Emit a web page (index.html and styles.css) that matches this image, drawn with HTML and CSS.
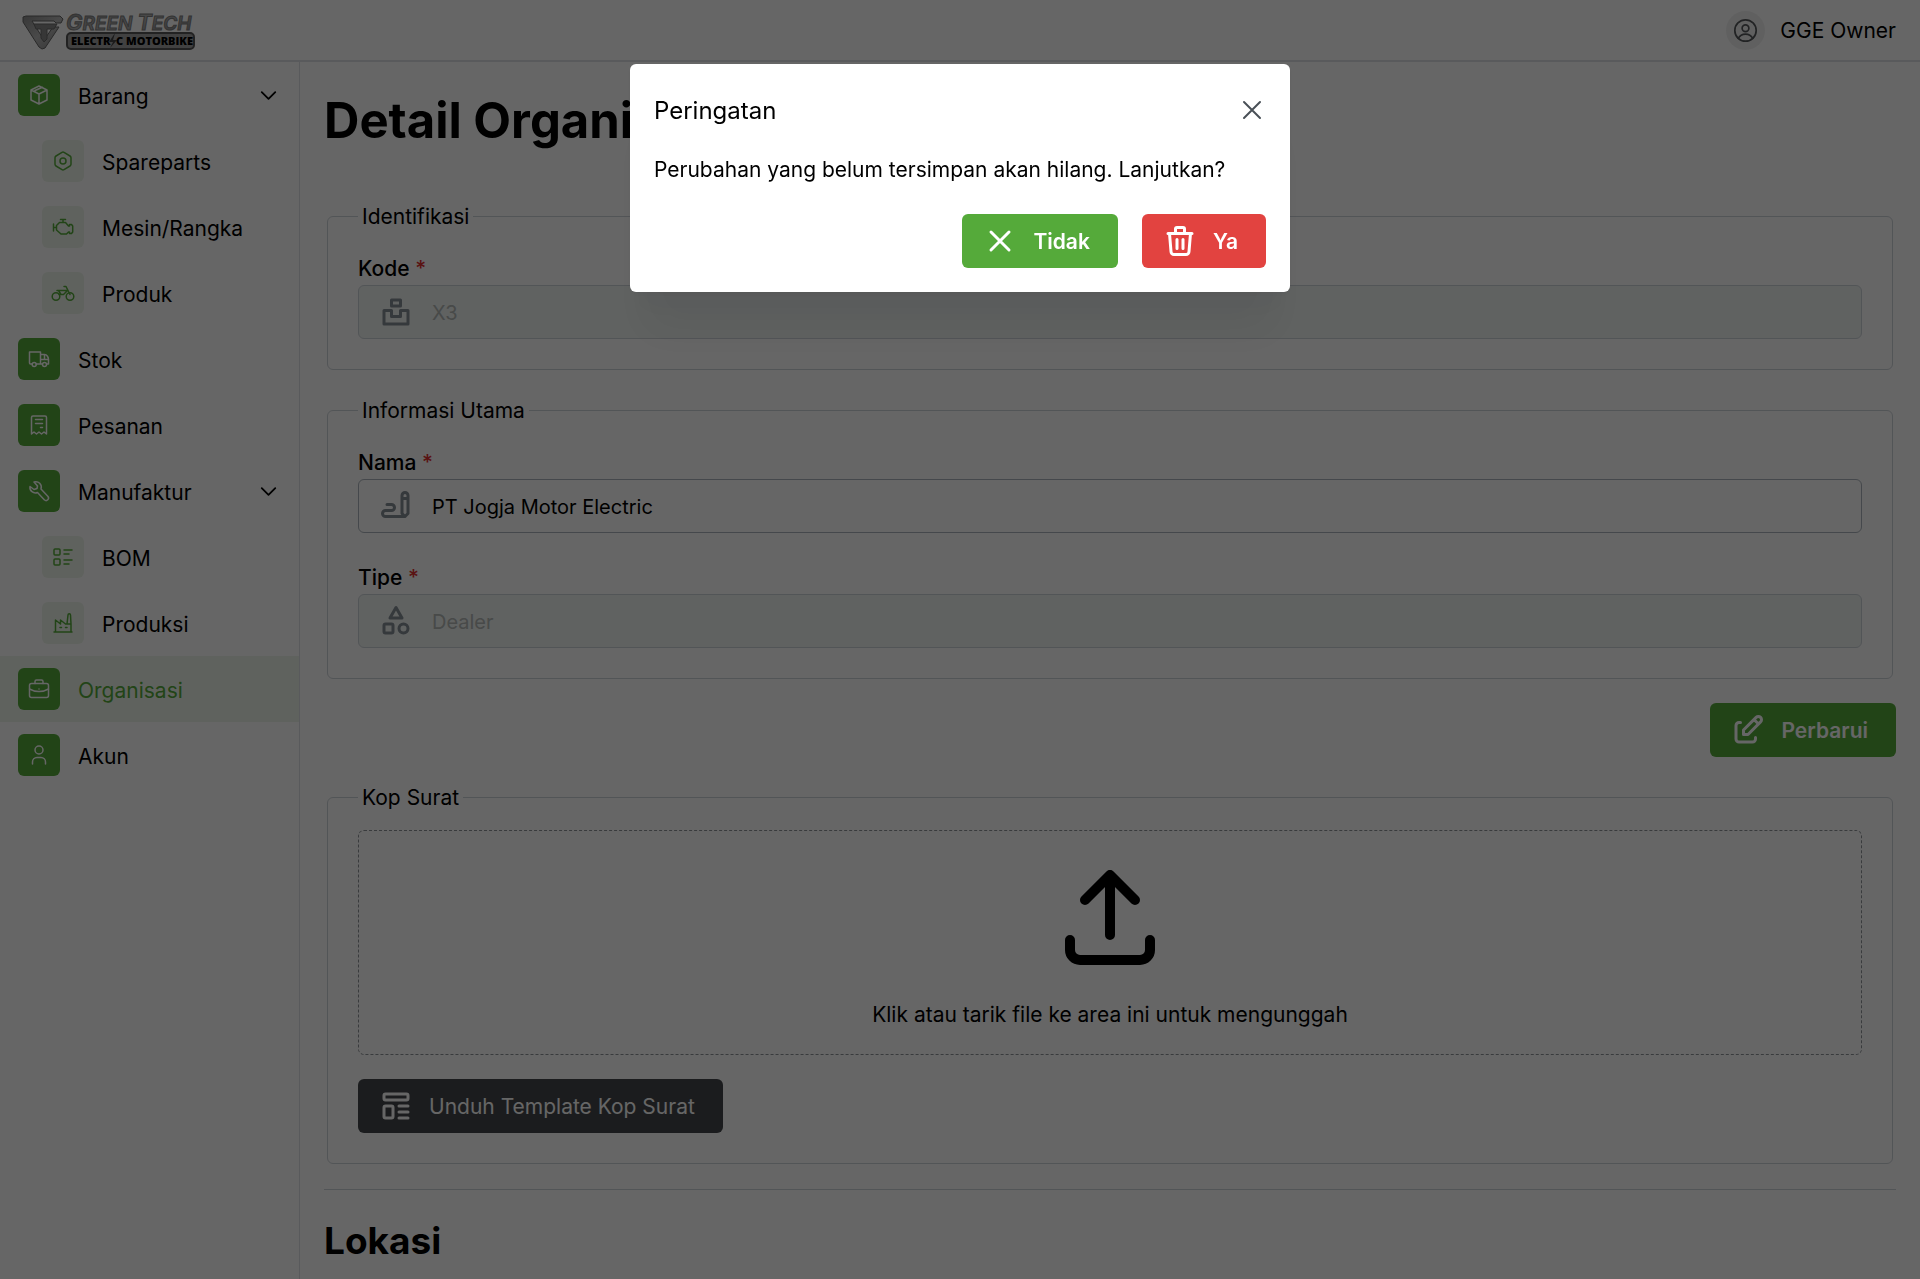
FILE: index.html
```html
<!DOCTYPE html>
<html lang="id">
<head>
<meta charset="utf-8">
<meta name="viewport" content="width=device-width, initial-scale=1">
<title>Detail Organisasi</title>
<link rel="stylesheet" href="styles.css">
</head>
<body>
<div class="app">
  <header class="topbar">
    <a class="logo" href="#" aria-label="Green Tech">
      <svg width="176" height="46" viewBox="0 -6 176 46">
        <defs>
          <linearGradient id="steel" x1="0" y1="0" x2="1" y2="1">
            <stop offset="0" stop-color="#8c8c8c"/><stop offset=".5" stop-color="#b8b8b8"/><stop offset="1" stop-color="#858585"/>
          </linearGradient>
        </defs>
        <path d="M1 4l3-1h34l3 3-2 4H34l-2-2H10l12 19 9-13h6L23 35l-3 1-3-2L1 9z" fill="url(#steel)" stroke="#666" stroke-linejoin="round"/>
        <path d="M12 11h23l-3 5h-7v10l-3 3-3-4v-9h-5z" fill="#8a8a8a" stroke="#6a6a6a"/>
        <text class="logo-name" x="44" y="17" fill="url(#steel)" stroke="#808080"><tspan class="logo-cap">G</tspan>REEN <tspan class="logo-cap">T</tspan>ECH</text>
        <rect x="45" y="20" width="127" height="16" rx="4" fill="#a2a2a2" stroke="#555" stroke-width="2"/>
        <text class="logo-tag" x="49" y="32">ELECTR</text>
        <path d="M93 20l-6 9h4l-3 6 7-8h-4z" fill="#444"/>
        <text class="logo-tag" x="94" y="32">C MOTORBIKE</text>
      </svg>
    </a>
    <div class="account">
      <span class="avatar">
        <svg width="27" height="27" viewBox="0 0 24 24" class="line thin"><circle cx="12" cy="12" r="9.500"/><circle cx="12" cy="10" r="3"/><path d="M5.500 19c1.500-2.700 3.500-3.800 6.500-3.800s5 1.100 6.500 3.800"/></svg>
      </span>
      <span>GGE Owner</span>
    </div>
  </header>

  <div class="body">
    <nav class="sidebar" aria-label="Menu">
      <button class="nav-item" type="button" aria-expanded="true">
        <span class="tile"><svg class="line thin" width="24" height="24" viewBox="0 0 24 24"><path d="M12 3l8 4v10l-8 4-8-4V7zM4 7l8 4 8-4M12 11v10M8 9V7.500l7.500-3.300"/></svg></span>
        <span class="nav-label">Barang</span>
        <svg class="line chevron" width="27" height="27" viewBox="0 0 24 24"><path d="M6 9l6 6 6-6"/></svg>
      </button>
      <a class="nav-item sub" href="#">
        <span class="tile"><svg class="line thin" width="24" height="24" viewBox="0 0 24 24"><path d="M13 3.400l6 3.600a2 2 0 0 1 1 1.700v6.600a2 2 0 0 1-1 1.700l-6 3.600a2 2 0 0 1-2 0L5 17a2 2 0 0 1-1-1.700V8.700A2 2 0 0 1 5 7l6-3.600a2 2 0 0 1 2 0z"/><circle cx="12" cy="12" r="3"/></svg></span>
        <span class="nav-label">Spareparts</span>
      </a>
      <a class="nav-item sub" href="#">
        <span class="tile"><svg class="line thin" width="24" height="24" viewBox="0 0 24 24"><path d="M2.500 9v7M2.500 12.500H5M9.500 4.500h5M12 4.500v3M8.500 7.500h6l3 3.500h1V9.500h2l1.200 1.500v6l-1.200 1.500h-2V17h-1l-2 2h-5.500L5.500 15v-4.500z"/></svg></span>
        <span class="nav-label">Mesin/Rangka</span>
      </a>
      <a class="nav-item sub" href="#">
        <span class="tile"><svg class="line thin" width="24" height="24" viewBox="0 0 24 24"><circle cx="5" cy="15.500" r="3.800"/><circle cx="19" cy="15.500" r="3.800"/><path d="M8 13.500h4.500l4-4H6M10 13.500l-2.500-4M13 5.500h2l1.500 3 2.500 5"/></svg></span>
        <span class="nav-label">Produk</span>
      </a>
      <a class="nav-item" href="#">
        <span class="tile"><svg class="line thin" width="24" height="24" viewBox="0 0 24 24"><path d="M5.200 17H3.500a1 1 0 0 1-1-1V5h11v12H9.200M13.500 7.500h4c2.500 0 4 3 4 5V17h-1.700M13.500 17h2M13.500 12.500h8M17.500 7.500v5"/><circle cx="7.200" cy="17.500" r="2"/><circle cx="17.500" cy="17.500" r="2"/></svg></span>
        <span class="nav-label">Stok</span>
      </a>
      <a class="nav-item" href="#">
        <span class="tile"><svg class="line thin" width="24" height="24" viewBox="0 0 24 24"><path d="M4.500 21V4.500A1.500 1.500 0 0 1 6 3h12a1.500 1.500 0 0 1 1.500 1.500V21L17 19l-2.500 2-2.500-2-2.500 2L7 19zM8.500 6.500h7M8.500 10.500h7M13.500 14.500h2"/></svg></span>
        <span class="nav-label">Pesanan</span>
      </a>
      <button class="nav-item" type="button" aria-expanded="true">
        <span class="tile"><svg class="line thin" width="24" height="24" viewBox="0 0 24 24"><path d="M7 3a5.500 5.500 0 0 1 7 7l7 7.500a2.500 2.500 0 0 1-3.500 3.500L10.500 13.500A5.500 5.500 0 0 1 3 7.500l4 3 3-1 .5-2.500z"/></svg></span>
        <span class="nav-label">Manufaktur</span>
        <svg class="line chevron" width="27" height="27" viewBox="0 0 24 24"><path d="M6 9l6 6 6-6"/></svg>
      </button>
      <a class="nav-item sub" href="#">
        <span class="tile"><svg class="line thin" width="24" height="24" viewBox="0 0 24 24"><path d="M13 5h8M13 9h5M13 15h8M13 19h5"/><rect x="3" y="4" width="6" height="6" rx="1"/><rect x="3" y="14" width="6" height="6" rx="1"/></svg></span>
        <span class="nav-label">BOM</span>
      </a>
      <a class="nav-item sub" href="#">
        <span class="tile"><svg class="line thin" width="24" height="24" viewBox="0 0 24 24"><path d="M3 21h18M4.500 21V9l5 4V9l5 4h5.500M16 13l1-9a1.200 1.200 0 0 1 2.500 0l.5 9v8M9 16.500h1.500M14.500 16.500H16"/></svg></span>
        <span class="nav-label">Produksi</span>
      </a>
      <a class="nav-item active" href="#" aria-current="page">
        <span class="tile"><svg class="line thin" width="24" height="24" viewBox="0 0 24 24"><rect x="2.500" y="6.500" width="19" height="14" rx="2"/><path d="M8 6.500V4.500a1.500 1.500 0 0 1 1.500-1.500h5A1.500 1.500 0 0 1 16 4.500v2M2.500 12c6 3.300 13 3.300 19 0M12 12v.1"/></svg></span>
        <span class="nav-label">Organisasi</span>
      </a>
      <a class="nav-item" href="#">
        <span class="tile"><svg class="line thin" width="24" height="24" viewBox="0 0 24 24"><circle cx="12" cy="7" r="4"/><path d="M5.500 21v-2a4.500 4.500 0 0 1 4.500-4.500h4a4.500 4.500 0 0 1 4.500 4.500v2"/></svg></span>
        <span class="nav-label">Akun</span>
      </a>
    </nav>

    <main class="content">
      <h1>Detail Organisasi</h1>
      <form class="stack">
        <fieldset>
          <legend>Identifikasi</legend>
          <div class="field">
            <label for="kode">Kode <span class="req">*</span></label>
            <div class="control disabled">
              <svg class="line" width="36" height="36" viewBox="0 0 24 24"><path d="M4 11h5v4h6v-4h5v9H4zM9 4h6v4H9z"/></svg>
              <input id="kode" type="text" value="X3" disabled>
            </div>
          </div>
        </fieldset>
        <fieldset>
          <legend>Informasi Utama</legend>
          <div class="field">
            <label for="nama">Nama <span class="req">*</span></label>
            <div class="control">
              <svg class="line" width="36" height="36" viewBox="0 0 24 24"><path d="M20 17V5c0-1.121-.879-2-2-2s-2 .879-2 2v12l2 2zM16 7h4M18 19H5a2 2 0 1 1 0-4h4a2 2 0 1 0 0-4H6"/></svg>
              <input id="nama" type="text" value="PT Jogja Motor Electric">
            </div>
          </div>
          <div class="field">
            <label for="tipe">Tipe <span class="req">*</span></label>
            <div class="control disabled">
              <svg class="line" width="36" height="36" viewBox="0 0 24 24"><path d="M12 3l-4 7h8z"/><circle cx="17" cy="17" r="3"/><rect x="4" y="14" width="6" height="6" rx="1"/></svg>
              <input id="tipe" type="text" value="Dealer" disabled>
            </div>
          </div>
        </fieldset>
        <div class="actions">
          <button class="btn green" type="button">
            <svg class="line" width="36" height="36" viewBox="0 0 24 24"><path d="M7 7H6a2 2 0 0 0-2 2v9a2 2 0 0 0 2 2h9a2 2 0 0 0 2-2v-1M20.385 6.585a2.100 2.100 0 0 0-2.970-2.970L9 12v3h3zM16 5l3 3"/></svg>
            Perbarui
          </button>
        </div>
        <fieldset class="letterhead">
          <legend>Kop Surat</legend>
          <button class="dropzone" type="button">
            <svg class="line" width="120" height="120" viewBox="0 0 24 24"><path d="M4 17v2a2 2 0 0 0 2 2h12a2 2 0 0 0 2-2v-2M7 9l5-5 5 5M12 4v12"/></svg>
            <span>Klik atau tarik file ke area ini untuk mengunggah</span>
          </button>
          <button class="btn dark" type="button">
            <svg class="line" width="36" height="36" viewBox="0 0 24 24"><rect x="4" y="4" width="16" height="4" rx="1"/><rect x="4" y="12" width="6" height="8" rx="1"/><path d="M14 12h6M14 16h6M14 20h6"/></svg>
            Unduh Template Kop Surat
          </button>
        </fieldset>
      </form>
      <hr>
      <h2>Lokasi</h2>
    </main>
  </div>
</div>

<div class="overlay">
  <section class="modal" role="dialog" aria-modal="true" aria-labelledby="modal-title">
    <div class="modal-head">
      <span id="modal-title" class="modal-title">Peringatan</span>
      <button class="close" type="button" aria-label="Tutup">
        <svg width="28" height="28" viewBox="0 0 28 28" class="line"><path d="M6 6l16 16M22 6L6 22"/></svg>
      </button>
    </div>
    <p>Perubahan yang belum tersimpan akan hilang. Lanjutkan?</p>
    <div class="modal-actions">
      <button class="btn green" type="button">
        <svg class="line" width="36" height="36" viewBox="0 0 24 24"><path d="M18 6L6 18M6 6l12 12"/></svg>
        Tidak
      </button>
      <button class="btn red" type="button">
        <svg class="line" width="36" height="36" viewBox="0 0 24 24"><path d="M4 7h16M10 11v6M14 11v6M5 7l1 12a2 2 0 0 0 2 2h8a2 2 0 0 0 2-2l1-12M9 7V4a1 1 0 0 1 1-1h4a1 1 0 0 1 1 1v3"/></svg>
        Ya
      </button>
    </div>
  </section>
</div>
</body>
</html>
```
FILE: styles.css
```css
* { box-sizing: border-box; }

body {
  margin: 0;
  overflow: hidden;
  background: #fff;
  color: #000;
  font: 21px/33px Inter, "Liberation Sans", sans-serif;
}

button, input { font: inherit; color: inherit; }
button { cursor: pointer; }

.line {
  flex: none;
  display: block;
  fill: none;
  stroke: currentColor;
  stroke-width: 2;
  stroke-linecap: round;
  stroke-linejoin: round;
}
.line.thin { stroke-width: 1.5; }

.app { display: flex; flex-direction: column; height: 100vh; }

.topbar {
  flex: none;
  display: flex;
  align-items: center;
  justify-content: space-between;
  height: 62px;
  padding: 0 24px 0 22px;
  border-bottom: 2px solid #dee2e6;
}
.logo { display: block; color: #000; }
.logo svg { display: block; }
.logo-name { font: italic 600 19px Inter, sans-serif; stroke-width: 1px; }
.logo-cap { font-size: 22px; }
.logo-tag { font: 800 11px "Open Sans", sans-serif; fill: #000; }
.account { display: flex; align-items: center; gap: 15px; }
.avatar {
  display: grid;
  place-items: center;
  width: 39px;
  height: 39px;
  border-radius: 50%;
  background: #f1f1f1;
  color: #55585b;
}

.body { flex: 1; display: flex; min-height: 0; }

.sidebar { flex: none; width: 300px; border-right: 1px solid #dee2e6; }
.nav-item {
  display: flex;
  align-items: center;
  gap: 18px;
  width: 100%;
  height: 66px;
  padding: 0 17px 0 18px;
  border: 0;
  background: none;
  color: #000;
  text-align: left;
  text-decoration: none;
}
.nav-item.sub { padding-left: 42px; }
.nav-label { flex: 1; padding-top: 2px; }
.nav-item.active { background: #eef6eb; color: #55aa3a; }
.tile {
  display: grid;
  place-items: center;
  width: 42px;
  height: 42px;
  border-radius: 6px;
  background: #55aa3a;
  color: #fff;
}
.sub .tile { background: #eef6eb; color: #55aa3a; }
.line.chevron { stroke-width: 1.6; }

.content { flex: 1; min-width: 0; padding: 24px; overflow: hidden; }
h1 { margin: 0 0 44px; font-size: 49px; line-height: 70px; font-weight: 700; }
h2 { margin: 0; font-size: 37px; line-height: 54px; font-weight: 700; }
hr { margin: 25px 0 24px; border: 0; border-top: 1px solid #ced4da; }

.stack { display: flex; flex-direction: column; gap: 24px; }
fieldset {
  min-width: 0;
  margin: 0 3px;
  padding: 16px 30px 30px;
  border: 1px solid #ced4da;
  border-radius: 6px;
}
legend { padding: 0 4px; }
.field + .field { margin-top: 25px; }
label { display: block; padding-top: 3px; font-weight: 500; }
.req { color: #e03131; }
.control {
  display: flex;
  align-items: center;
  gap: 18px;
  height: 54px;
  padding: 0 19px;
  border: 1px solid #adb5bd;
  border-radius: 6px;
  color: #000;
}
.control .line { color: #868e96; }
.control input {
  flex: 1;
  min-width: 0;
  height: 48px;
  padding: 2px 0 0;
  border: 0;
  background: none;
  outline: 0;
  font-size: 20px;
}
.control.disabled { background: #f0f5f3; border-color: #ced4da; }
.control.disabled input { color: #b4b8b6; }

.actions { display: flex; justify-content: flex-end; }
.btn {
  display: inline-flex;
  align-items: center;
  gap: 15px;
  height: 54px;
  padding: 0 28px 0 20px;
  border: 0;
  border-radius: 6px;
  color: #fff;
  font-weight: 600;
}
.green { background: #55aa3a; }
.red { background: #e24340; }
.dark { background: #44474b; font-weight: 400; }

.dropzone {
  display: flex;
  flex-direction: column;
  align-items: center;
  gap: 23px;
  width: 100%;
  margin: 0 0 24px;
  padding: 24px 24px 23px;
  border: 1px dashed #8f9499;
  border-radius: 6px;
  background: none;
}
.letterhead .btn { display: flex; }

.overlay {
  position: fixed;
  inset: 0;
  display: flex;
  align-items: flex-start;
  justify-content: center;
  padding-top: 64px;
  background: rgba(0, 0, 0, .6);
}
.modal {
  width: 660px;
  padding: 24px;
  border-radius: 6px;
  background: #fff;
  box-shadow: 0 2px 5px rgba(0, 0, 0, .05), 0 54px 42px -10px rgba(0, 0, 0, .05), 0 26px 26px -10px rgba(0, 0, 0, .04);
}
.modal-head { display: flex; align-items: center; justify-content: space-between; height: 44px; }
.modal-title { font-size: 24px; }
.close { padding: 0; border: 0; background: none; color: #495057; }
.modal p { margin: 21px 0 28px; }
.modal-actions { display: flex; justify-content: flex-end; gap: 24px; }
```
